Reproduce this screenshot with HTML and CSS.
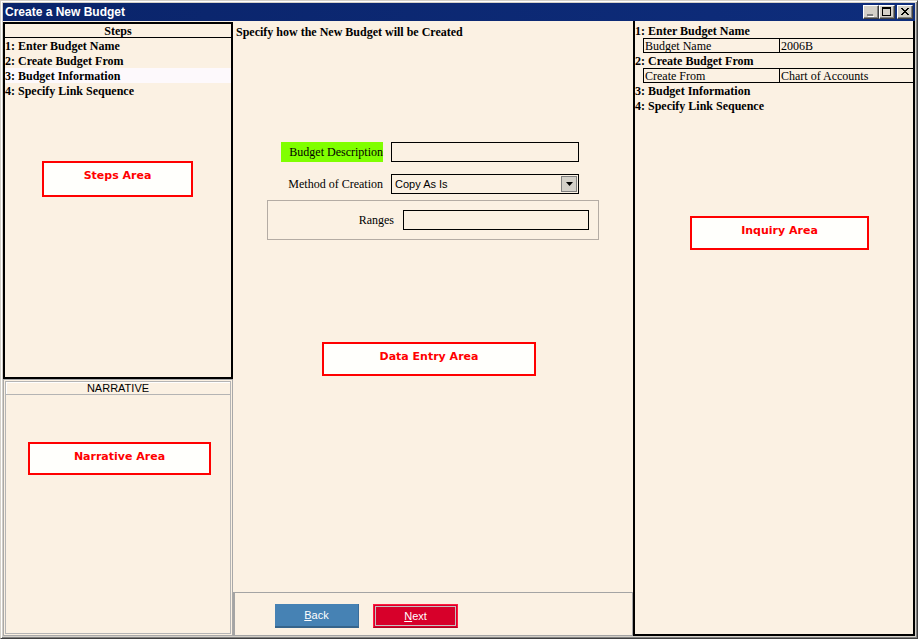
FILE: index.html
```html
<!DOCTYPE html>
<html lang="en">
<head>
<meta charset="UTF-8">
<title>Create a New Budget</title>
<link rel="stylesheet" href="styles.css">
</head>
<body>
<div class="ventana">
<div class="titulo">
<span class="titulo-texto">Create a New Budget</span>
<div class="controles">
<span class="ctl"><svg width="12" height="10" viewBox="0 0 12 10"><rect x="2" y="7" width="6" height="2" fill="#808080"/><rect x="3" y="9" width="6" height="1" fill="#fff"/></svg></span>
<span class="ctl"><svg width="12" height="10" viewBox="0 0 12 10"><rect x="1.5" y="0.5" width="8" height="8" fill="none" stroke="#000"/><rect x="1" y="0" width="9" height="2" fill="#000"/></svg></span>
<span class="ctl ctl-cerrar"><svg width="12" height="10" viewBox="0 0 12 10"><path d="M2 1 L9 8 M3 1 L10 8 M9 1 L2 8 M10 1 L3 8" stroke="#000" stroke-width="1"/></svg></span>
</div>
</div>
<div class="cliente">
<div class="izquierda">
<div class="pasos">
<div class="pasos-cabecera">Steps</div>
<div class="paso">1: Enter Budget Name</div>
<div class="paso">2: Create Budget From</div>
<div class="paso activo">3: Budget Information</div>
<div class="paso">4: Specify Link Sequence</div>
</div>
<div class="narrativa">
<div class="narrativa-cabecera">NARRATIVE</div>
<div class="narrativa-cuerpo"></div>
</div>
</div>
<div class="centro">
<div class="entrada">
<div class="entrada-titulo">Specify how the New Budget will be Created</div>
<div class="formulario">
<div class="fila">
<span class="etiqueta resaltada">Budget Description</span>
<span class="campo"></span>
</div>
<div class="fila">
<span class="etiqueta">Method of Creation</span>
<span class="campo combo">Copy As Is<span class="combo-boton"><svg width="7" height="4" viewBox="0 0 7 4"><path d="M0 0 H7 L3.5 4 Z" fill="#000"/></svg></span></span>
</div>
<div class="grupo">
<span class="etiqueta-rango">Ranges</span>
<span class="campo campo-rango"></span>
</div>
</div>
</div>
<div class="botonera">
<button class="boton boton-atras"><u>B</u>ack</button>
<button class="boton boton-siguiente"><u>N</u>ext</button>
</div>
</div>
<div class="consulta">
<div class="consulta-paso">1: Enter Budget Name</div>
<div class="consulta-fila"><span class="celda">Budget Name</span><span class="celda">2006B</span></div>
<div class="consulta-paso">2: Create Budget From</div>
<div class="consulta-fila"><span class="celda">Create From</span><span class="celda">Chart of Accounts</span></div>
<div class="consulta-paso">3: Budget Information</div>
<div class="consulta-paso">4: Specify Link Sequence</div>
</div>
</div>
<div class="nota nota-pasos">Steps Area</div>
<div class="nota nota-narrativa">Narrative Area</div>
<div class="nota nota-entrada">Data Entry Area</div>
<div class="nota nota-consulta">Inquiry Area</div>
</div>
</body>
</html>
```
FILE: styles.css
```css
body {
    margin: 0;
    background: #d4d0c8;
}

.ventana {
    position: relative;
    width: 918px;
    height: 639px;
    box-sizing: border-box;
    border: 1px solid;
    border-color: #d4d0c8 #404040 #404040 #d4d0c8;
    box-shadow: inset 1px 1px #fff, inset -1px -1px #808080;
    padding: 2px;
    background: #d4d0c8;
    display: flex;
    flex-direction: column;
}

.titulo {
    height: 18px;
    background: linear-gradient(to right, #0a246a, #0e2d7c);
    display: flex;
    align-items: center;
    justify-content: space-between;
    padding: 0 2px;
}

.titulo-texto {
    color: #fff;
    font: bold 12px "Liberation Sans", Arial, sans-serif;
}

.controles {
    display: flex;
}

.ctl {
    width: 16px;
    height: 14px;
    box-sizing: border-box;
    background: #d4d0c8;
    border: 1px solid;
    border-color: #fff #404040 #404040 #fff;
    box-shadow: inset -1px -1px #808080;
    display: flex;
    align-items: center;
    justify-content: center;
}

.ctl-cerrar {
    margin-left: 2px;
}

.cliente {
    flex: 1;
    display: flex;
    background: #fbf1e3;
}

/* Panel de pasos */
.izquierda {
    width: 230px;
    display: flex;
    flex-direction: column;
}

.pasos {
    margin-top: 1px;
    height: 357px;
    box-sizing: border-box;
    border: 2px solid #000;
    font: bold 12px "Liberation Serif", "Times New Roman", serif;
}

.pasos-cabecera {
    height: 13px;
    line-height: 15px;
    text-align: center;
    border-bottom: 1px solid #000;
}

.paso {
    height: 15px;
    line-height: 16px;
}

.paso.activo {
    background: #fdf9fc;
}

.narrativa {
    flex: 1;
    border: 1px solid #a8a8a8;
    padding: 1px;
    display: flex;
    flex-direction: column;
}

.narrativa-cabecera {
    height: 12px;
    line-height: 13px;
    border: 1px solid #b4b4b4;
    box-shadow: inset 1px 1px #fff;
    text-align: center;
    font: 11px "Liberation Sans", Arial, sans-serif;
}

.narrativa-cuerpo {
    flex: 1;
    border: 1px solid #b4b4b4;
    border-top: 0;
}

/* Panel central */
.centro {
    width: 400px;
    display: flex;
    flex-direction: column;
}

.entrada {
    flex: 1;
    padding: 4px 0 0 3px;
}

.entrada-titulo {
    font: bold 12px "Liberation Serif", "Times New Roman", serif;
    line-height: 15px;
}

.formulario {
    margin: 102px 0 0 31px;
    width: 332px;
}

.fila {
    display: flex;
    align-items: center;
    margin-left: 14px;
    height: 20px;
}

.fila + .fila {
    margin-top: 12px;
}

.etiqueta {
    width: 102px;
    margin-right: 8px;
    text-align: right;
    font: 12px "Liberation Serif", "Times New Roman", serif;
}

.etiqueta.resaltada {
    height: 20px;
    line-height: 20px;
    background: #80ff00;
}

.campo {
    width: 188px;
    height: 20px;
    box-sizing: border-box;
    border: 1px solid #000;
    background: #fbf1e3;
}

.combo {
    display: flex;
    align-items: center;
    justify-content: space-between;
    padding: 0 1px 0 3px;
    font: 11px "Liberation Sans", Arial, sans-serif;
}

.combo-boton {
    width: 16px;
    height: 16px;
    box-sizing: border-box;
    background: #d4d0c8;
    border: 1px solid #808080;
    display: flex;
    align-items: center;
    justify-content: center;
}

.grupo {
    margin-top: 6px;
    height: 40px;
    box-sizing: border-box;
    border: 1px solid #b4aca4;
    display: flex;
    align-items: center;
    justify-content: flex-end;
    padding-right: 9px;
}

.etiqueta-rango {
    margin-right: 9px;
    font: 12px "Liberation Serif", "Times New Roman", serif;
}

.campo-rango {
    width: 186px;
}

.botonera {
    height: 44px;
    box-sizing: border-box;
    border: 1px solid #a4a4a4;
    border-left-width: 2px;
    padding: 11px 0 0 40px;
    display: flex;
    align-items: flex-start;
    gap: 14px;
}

.boton {
    height: 24px;
    padding: 0;
    color: #fff;
    font: 11px "Liberation Sans", Arial, sans-serif;
    cursor: pointer;
}

.boton-atras {
    width: 84px;
    background: #4682b4;
    border: 0;
    border-right: 1px solid #3a6d9a;
    border-bottom: 2px solid #36648b;
}

.boton-siguiente {
    width: 85px;
    background: #d7002a;
    border: 1px solid #ff1a40;
    border-bottom-color: #b00022;
    box-shadow: inset 0 0 0 1px #d7002a, inset 0 0 0 2px #c4c0c0;
}

/* Panel de consulta */
.consulta {
    width: 282px;
    box-sizing: border-box;
    border: 2px solid #000;
    border-top: 0;
    padding: 2px 0 0 0;
    font: 12px "Liberation Serif", "Times New Roman", serif;
}

.consulta-paso {
    height: 15px;
    line-height: 16px;
    font-weight: bold;
}

.consulta-fila {
    display: flex;
    height: 15px;
    box-sizing: border-box;
    margin-left: 8px;
    border: 1px solid #000;
    border-right: 0;
    line-height: 14px;
}

.celda {
    padding-left: 1px;
}

.celda:first-child {
    width: 134px;
    border-right: 1px solid #000;
}

/* Notas de area */
.nota {
    position: absolute;
    box-sizing: border-box;
    border: 2px solid #ff0000;
    background: #fffffc;
    color: #ff0000;
    font: bold 11px "DejaVu Sans", sans-serif;
    line-height: 13px;
    text-align: center;
    padding-top: 6px;
}

.nota-pasos {
    left: 41px;
    top: 160px;
    width: 151px;
    height: 36px;
}

.nota-narrativa {
    left: 27px;
    top: 441px;
    width: 183px;
    height: 33px;
}

.nota-entrada {
    left: 321px;
    top: 341px;
    width: 214px;
    height: 34px;
}

.nota-consulta {
    left: 689px;
    top: 215px;
    width: 179px;
    height: 34px;
}
```
